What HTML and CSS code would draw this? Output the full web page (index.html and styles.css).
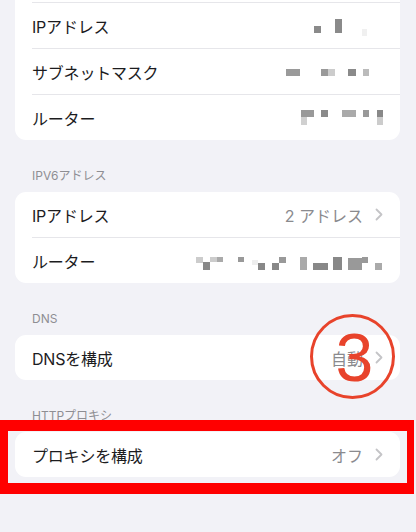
FILE: index.html
```html
<!DOCTYPE html>
<html lang="ja">
<head>
    <meta charset="UTF-8">
    <title>Wi-Fi</title>
    <link rel="stylesheet" href="styles.css">
</head>
<body>
<div class="page">
    <section class="card card-first">
        <div class="row">
            <span class="label">IPを構成</span>
            <span class="value">自動</span>
            <svg class="chevron" width="8" height="13" viewBox="0 0 8 13"><path d="M1.5 1.5L6.5 6.5L1.5 11.5"/></svg>
        </div>
        <div class="row">
            <span class="label">IPアドレス</span>
            <svg class="mosaic" width="200" height="20" viewBox="0 0 200 20">
                <rect x="131" y="10" width="7" height="7" fill="#8a8a8a"/>
                <rect x="152" y="3" width="7" height="14" fill="#8a8a8a"/>
                <rect x="179" y="13" width="5" height="8" fill="#f0f0f0"/>
            </svg>
        </div>
        <div class="row">
            <span class="label">サブネットマスク</span>
            <svg class="mosaic" width="200" height="20" viewBox="0 0 200 20">
                <rect x="103" y="7" width="14" height="7" fill="#9a9a9a"/>
                <rect x="138" y="7" width="7" height="7" fill="#999"/>
                <rect x="145" y="7" width="7" height="7" fill="#ccc"/>
                <rect x="165" y="7" width="8" height="7" fill="#8a8a8a"/>
                <rect x="180" y="7" width="6" height="7" fill="#bbb"/>
            </svg>
        </div>
        <div class="row">
            <span class="label">ルーター</span>
            <svg class="mosaic" width="200" height="20" viewBox="0 0 200 20">
                <rect x="118" y="2" width="13" height="7" fill="#999"/>
                <rect x="118" y="9" width="6" height="8" fill="#d0d0d0"/>
                <rect x="138" y="2" width="7" height="7" fill="#8a8a8a"/>
                <rect x="159" y="2" width="14" height="7" fill="#aaa"/>
                <rect x="180" y="2" width="6" height="7" fill="#999"/>
                <rect x="194" y="2" width="6" height="7" fill="#888"/>
                <rect x="194" y="9" width="6" height="8" fill="#ccc"/>
            </svg>
        </div>
    </section>

    <h2 class="header">IPV6アドレス</h2>
    <section class="card">
        <div class="row">
            <span class="label">IPアドレス</span>
            <span class="value">2 アドレス</span>
            <svg class="chevron" width="8" height="13" viewBox="0 0 8 13"><path d="M1.5 1.5L6.5 6.5L1.5 11.5"/></svg>
        </div>
        <div class="row">
            <span class="label">ルーター</span>
            <svg class="mosaic" width="200" height="20" viewBox="0 0 200 20">
                <rect x="13" y="6" width="7" height="6" fill="#ccc"/>
                <rect x="20" y="11" width="7" height="8" fill="#888"/>
                <rect x="27" y="6" width="7" height="5" fill="#ccc"/>
                <rect x="34" y="6" width="6" height="5" fill="#aaa"/>
                <rect x="55" y="6" width="6" height="5" fill="#999"/>
                <rect x="69" y="9" width="6" height="5" fill="#eee"/>
                <rect x="75" y="12" width="7" height="7" fill="#888"/>
                <rect x="89" y="12" width="7" height="7" fill="#888"/>
                <rect x="96" y="6" width="7" height="6" fill="#999"/>
                <rect x="117" y="6" width="7" height="13" fill="#aaa"/>
                <rect x="130" y="12" width="15" height="7" fill="#888"/>
                <rect x="150" y="6" width="9" height="13" fill="#888"/>
                <rect x="165" y="7" width="14" height="12" fill="#999"/>
                <rect x="179" y="6" width="6" height="6" fill="#999"/>
                <rect x="192" y="12" width="7" height="7" fill="#aaa"/>
            </svg>
        </div>
    </section>

    <h2 class="header">DNS</h2>
    <section class="card">
        <div class="row">
            <span class="label">DNSを構成</span>
            <span class="value">自動</span>
            <svg class="chevron" width="8" height="13" viewBox="0 0 8 13"><path d="M1.5 1.5L6.5 6.5L1.5 11.5"/></svg>
        </div>
    </section>

    <h2 class="header">HTTPプロキシ</h2>
    <section class="card">
        <div class="row">
            <span class="label">プロキシを構成</span>
            <span class="value">オフ</span>
            <svg class="chevron" width="8" height="13" viewBox="0 0 8 13"><path d="M1.5 1.5L6.5 6.5L1.5 11.5"/></svg>
        </div>
    </section>
</div>

<div class="mark-box"></div>
<div class="step">3</div>
</body>
</html>
```

FILE: styles.css
```css
*{
    margin: 0;
    padding: 0;
    box-sizing: border-box;
}
html, body{
    width: 416px;
    height: 532px;
    overflow: hidden;
}
body{
    background: #f2f2f7;
    font-family: "Inter", "Noto Sans CJK JP", sans-serif;
    color: #1c1c1e;
}
.page{
    margin-top: -43px;
    padding: 0 16px 0 15px;
}
.card{
    background: #ffffff;
    border-radius: 11px;
    overflow: hidden;
}
.row{
    display: flex;
    align-items: center;
    height: 45px;
    margin-left: 17px;
    padding-right: 17px;
}
.row + .row{
    border-top: 1px solid #e6e6ea;
    height: 46px;
}
.label{
    font-size: 16px;
    letter-spacing: -0.2px;
}
.value{
    margin-left: auto;
    font-size: 16px;
    color: #8a8a8e;
}
.chevron{
    margin-left: 12px;
    fill: none;
    stroke: #c4c4c7;
    stroke-width: 1.8;
    stroke-linecap: round;
    stroke-linejoin: round;
}
.mosaic{
    margin-left: auto;
}
.header{
    padding: 28px 0 8px 17px;
    font-size: 12px;
    line-height: 16px;
    font-weight: 400;
    color: #8e8e93;
}
.mark-box{
    position: absolute;
    left: 0;
    top: 420px;
    width: 414px;
    height: 74px;
    border-style: solid;
    border-color: #ff0000;
    border-width: 11px 7px 11px 8px;
}
.step{
    position: absolute;
    left: 310px;
    top: 314px;
    width: 85px;
    height: 85px;
    border: 3px solid #e8432b;
    border-radius: 50%;
    display: flex;
    align-items: center;
    justify-content: center;
    font-family: "Liberation Sans", sans-serif;
    font-size: 68px;
    line-height: 1;
    color: #e8432b;
    padding-left: 4px;
}
```
